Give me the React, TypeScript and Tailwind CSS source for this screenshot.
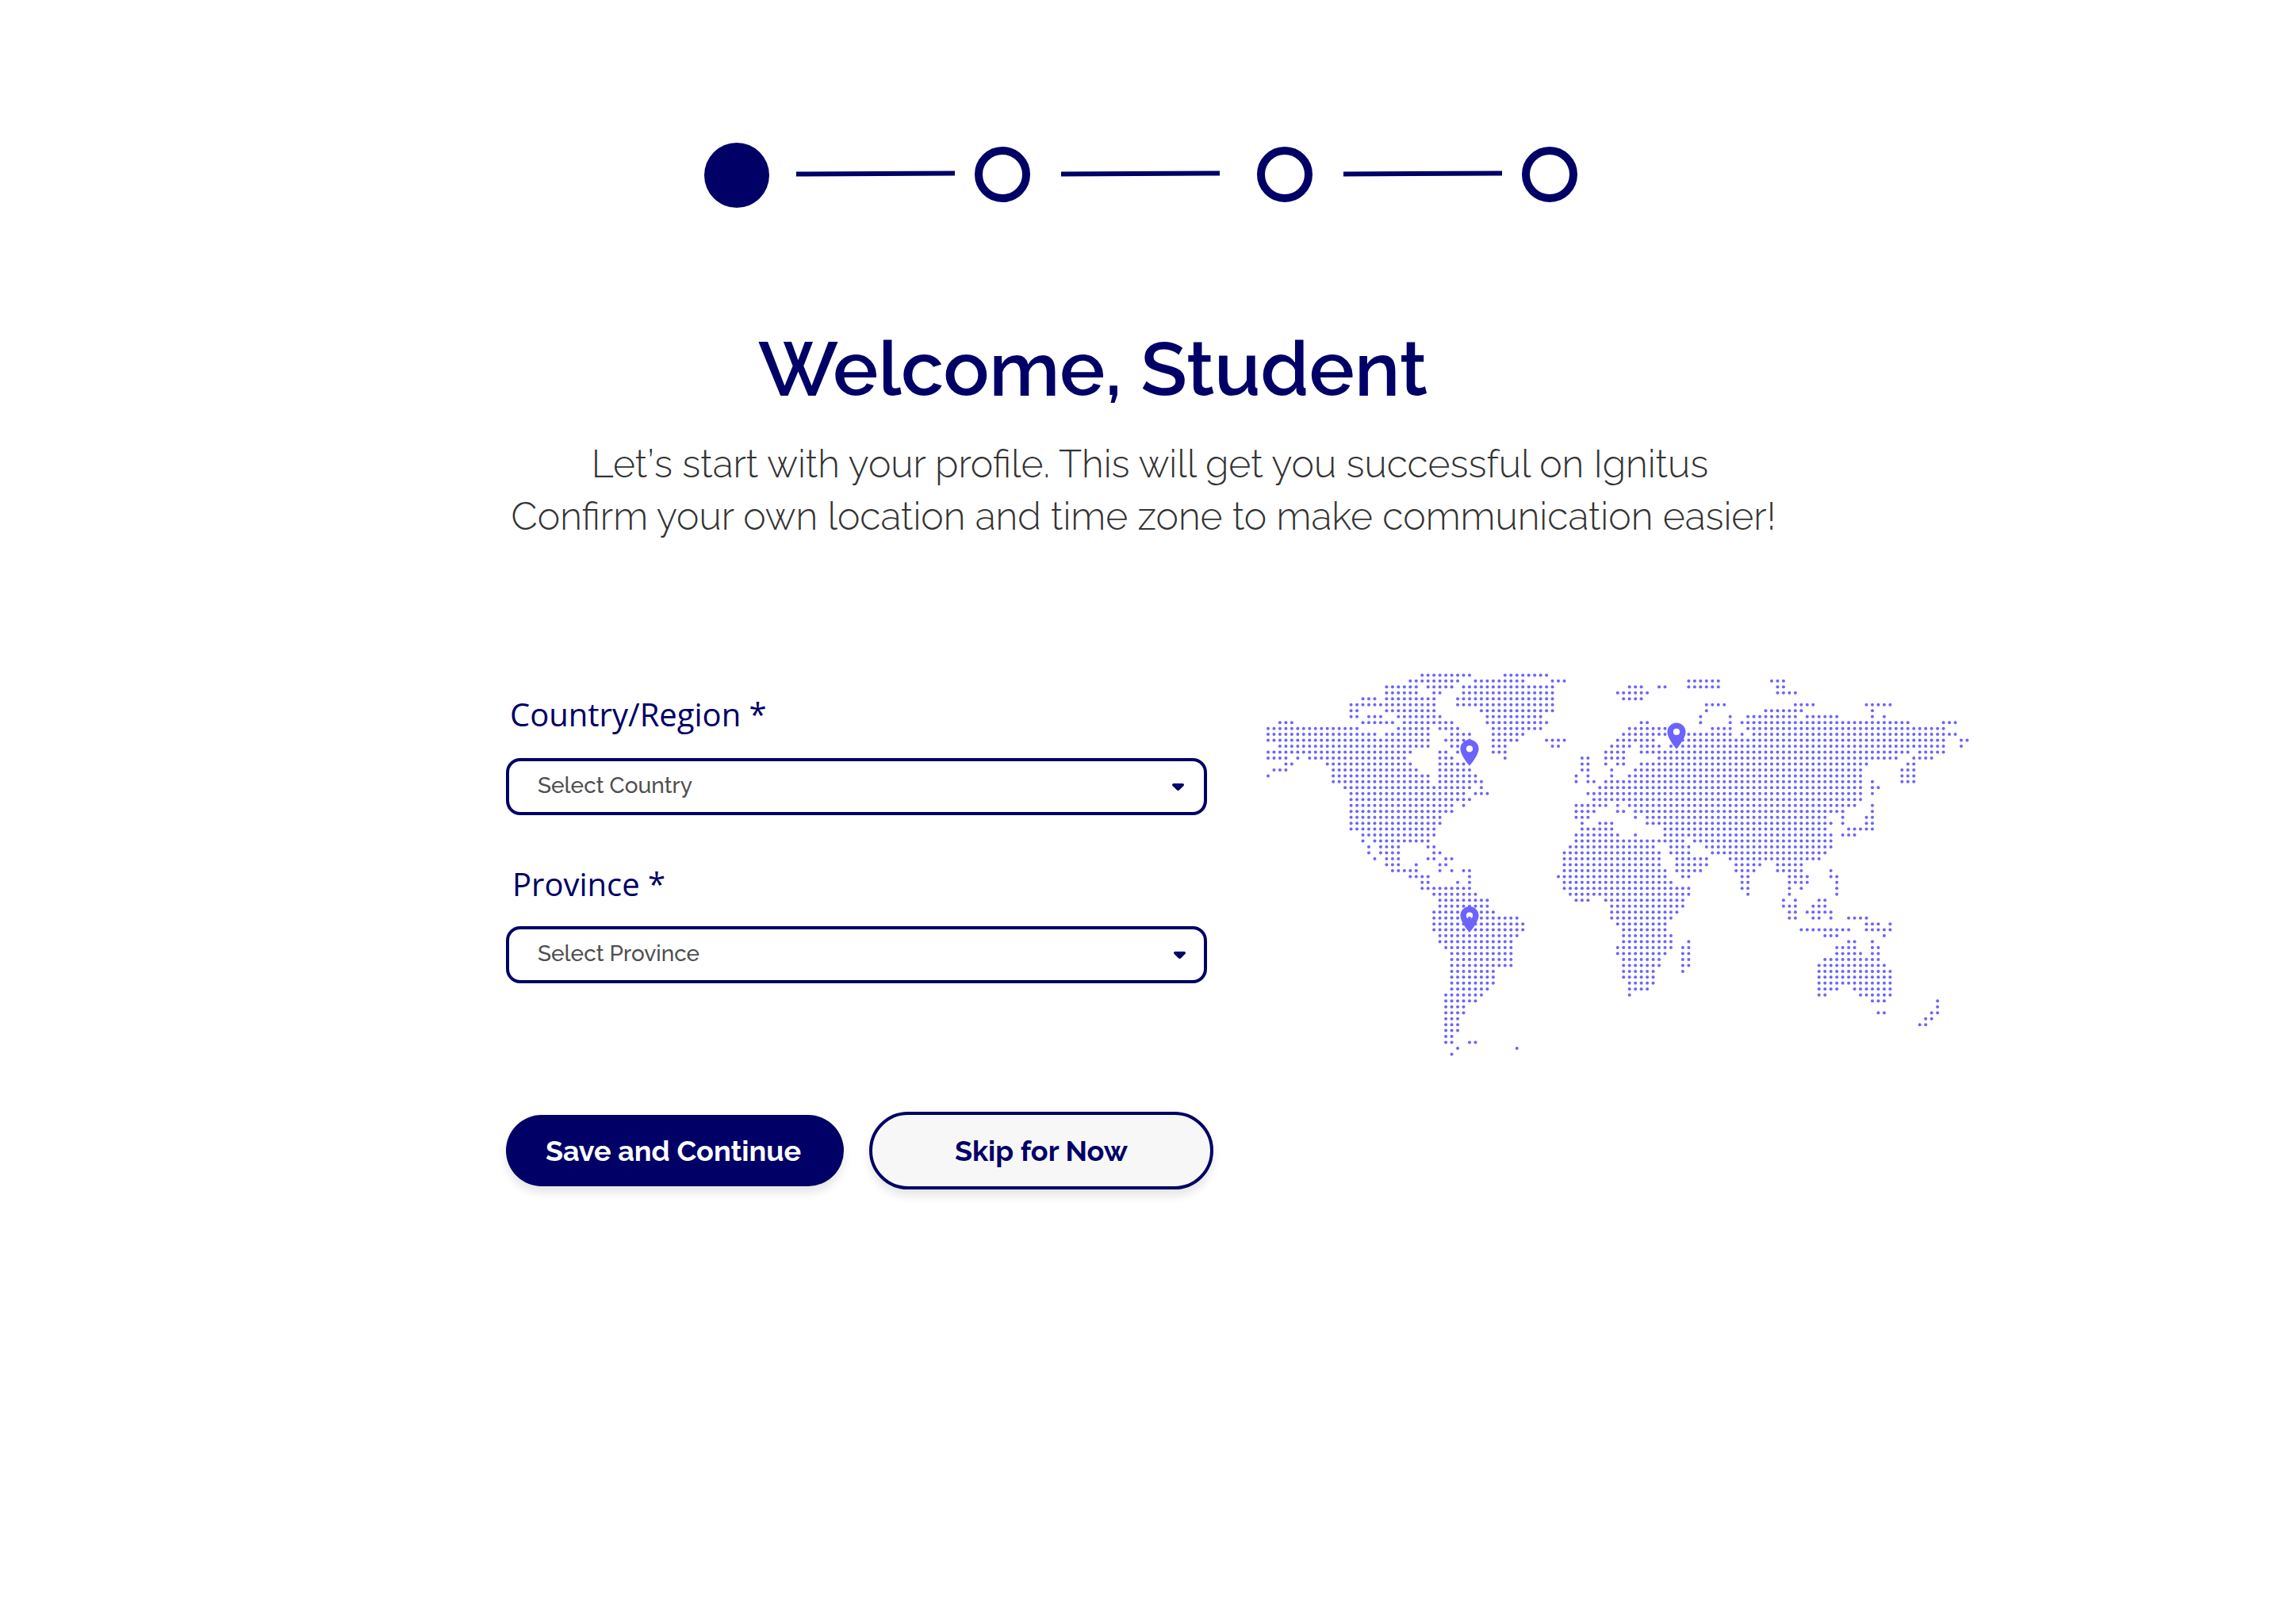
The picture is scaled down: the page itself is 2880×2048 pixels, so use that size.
import type { ReactNode } from 'react';

const PITCH = 7.47;
const ORIGIN_X = 9;
const ORIGIN_Y = 11.4;

/** Inclusive column ranges of the dots on each row of the world map. */
const MAP_ROWS: string[] = [
  '26-34 40-47',
  '24-32 35-43 48-50 71-76 85-87',
  '20-25 27-31 33-48 61-63 66-67 71-76 86-87',
  '20-25 28-29 33-48 59-64 86-89',
  '16-18 20-28 32-48 60-63',
  '14-28 32-48 74-77 89-92 101-105',
  '14-15 20-28 36-48 74 84-90 102',
  '14-15 17-19 22-29 37-46 73 78 81-89 91-96 102 104',
  '2-4 16-21 23-31 37-47 63-64 73 78 80-108 114-116',
  '0-15 22-27 29-32 38-46 61-67 75-78 81-114',
  '0-18 20-27 31-34 38-43 60-67 71-78 80 82-116',
  '0-27 30-34 38-42 47-50 59-65 70-114 117-118',
  '2-27 31-32 38-40 48-49 58-61 63-66 68-114 117',
  '0-24 29-30 32 38-40 57-60 63-108 110-114',
  '0-3 5 7-23 29-31 40 53-54 57-60 66-106 109-112',
  '3-4 10-24 29-33 53-54 57 59-60 63-101 108-109',
  '1-3 11-25 29-34 53-54 58 62-100 107-109',
  '0 11-27 29-35 52 54 58 61-100 107-109',
  '11-27 29-36 52 54-55 57-100 102 107-109',
  '13-34 36 56-100 102-103',
  '14-33 35-37 54-100 102',
  '14-34 55-100',
  '14-31 33 52-57 59 61-99 102',
  '14-31 52-55 59-60 62-97 102',
  '14-29 52-54 62 64-94 97 101-102',
  '14-29 53 56-58 64-95 97 101-102',
  '14-28 53-58 67-94 98-102',
  '16-28 52-59 62 67-95 97-99',
  '16 18-27 52-70 72-95',
  '17 19-22 27-28 51-65 68-71 74-95',
  '17 19-22 28-29 50-66 68-71 75-94',
  '18 20-22 27-28 30-31 50-66 69-74 78-93',
  '20-22 25 29-30 50-66 69-74 79-83 86-90',
  '21-25 29 31 33-34 50-67 69-73 79-82 86-90 95',
  '24-27 34 49-67 70-71 80-81 88-91 95-96',
  '26-27 32 34 50-68 80-81 88-91 96',
  '26-34 50-71 80-81 88 90 96',
  '28-35 51-71 81 88 96',
  '29-37 52-54 57-70 87 89 93-94',
  '29-37 58-70 87-89 92-94',
  '28-33 35-38 58-69 88-89 91-95',
  '28-42 58-68 88-89 92-93 95 98-101',
  '28-43 59-67 101-103 105',
  '28-43 60-67 90-98 101-105',
  '29-42 60-68 94-96 104',
  '29-41 60-68 71 98-99 102',
  '30-41 59-68 70-71 96-99 102-103',
  '31-41 59-67 70-71 96-100 102-103',
  '31-41 60-66 70-71 94-103',
  '31-41 60-66 70-71 93-104',
  '31-38 60-65 70 93-105',
  '31-38 60-65 93-105',
  '31-38 61-65 93-105',
  '31-37 61-64 93-96 99-105',
  '30-36 61 93-94 100-105',
  '30-35 102-104 113',
  '30-33 113',
  '30-33 103-104 112-113',
  '30-32 111-112',
  '30-32 110-111',
  '30-32',
  '30-31',
  '30-31 34-35',
  '32 42',
  '31',
];

const DOTS = MAP_ROWS.flatMap((row, r) =>
  row.split(' ').flatMap((range) => {
    const [from, to = from] = range.split('-').map(Number);
    return Array.from({ length: to - from + 1 }, (_, i) => ({ c: from + i, r }));
  }),
);

/** Tip-down location pins: horizontal centre and top edge. */
const PINS = [
  { x: 263, y: 92.7 },
  { x: 524, y: 71.4 },
  { x: 263, y: 303 },
];

function WorldMap() {
  return (
    <svg className="h-[500px] w-[900px] fill-[#6c63ff]" viewBox="0 0 900 500" aria-label="World map">
      {DOTS.map(({ c, r }) => (
        <circle key={`${c}-${r}`} cx={ORIGIN_X + c * PITCH} cy={ORIGIN_Y + r * PITCH} r={2} />
      ))}
      {PINS.map(({ x, y }) => (
        <path
          key={`${x}-${y}`}
          transform={`translate(${x - 19.8} ${y - 3.3}) scale(1.65)`}
          d="M12 2C8.13 2 5 5.13 5 9c0 5.25 7 13 7 13s7-7.75 7-13c0-3.87-3.13-7-7-7zm0 9.5a2.5 2.5 0 0 1 0-5 2.5 2.5 0 0 1 0 5z"
        />
      ))}
    </svg>
  );
}

function Ring({ className }: { className: string }) {
  return <div className={`mt-[5px] size-[70px] shrink-0 rounded-full border-[10px] border-[#000066] ${className}`} />;
}

function Connector({ className }: { className: string }) {
  return <div className={`h-[6px] w-[200px] shrink-0 rotate-[-0.25deg] bg-[#000066] ${className}`} />;
}

function Stepper() {
  return (
    <div className="ml-[888px] mt-[180px] flex h-[82px] items-start">
      <div className="size-[82px] shrink-0 rounded-full bg-[#000066]" />
      <Connector className="ml-[34px] mt-[36.4px]" />
      <Ring className="ml-[25px]" />
      <Connector className="ml-[39px] mt-[35.6px]" />
      <Ring className="ml-[47px]" />
      <Connector className="ml-[39px] mt-[36.4px]" />
      <Ring className="ml-[25px]" />
    </div>
  );
}

function Select({ children, caret }: { children: ReactNode; caret: string }) {
  return (
    <button
      type="button"
      className="flex h-[72px] w-[884px] items-center justify-between rounded-[18px] border-4 border-[#000066] bg-white pl-[36px]"
    >
      <span className="pb-[2px] text-[28px] font-medium leading-none text-[#4f4f4f]">{children}</span>
      <svg className={`h-[9px] w-[15px] fill-[#000066] ${caret}`} viewBox="0 0 15 9">
        <path d="M1.8 0h11.4c1.6 0 2.3 1.9 1.2 3L9.1 8.3c-.9 .9-2.3 .9-3.2 0L.6 3C-.5 1.9 .2 0 1.8 0z" />
      </svg>
    </button>
  );
}

export default function App() {
  return (
    <main className="flex h-[2048px] w-[2880px] flex-col overflow-hidden bg-white font-[Raleway,Lato,sans-serif]">
      <Stepper />

      <h1 className="ml-[956px] mt-[154.5px] whitespace-nowrap text-[96px] font-semibold leading-none text-[#000066]">
        Welcome, Student
      </h1>

      <div className="ml-[643px] mt-[39.5px] flex w-[1598px] flex-col items-center whitespace-nowrap text-[48px] font-light leading-[66px] text-[#333333]">
        <p className="pl-[16px]">
          Let<span className="px-[0.1px]">’</span>s start with your profile. This will get you successful on Ignitus
        </p>
        <p>Confirm your own location and time zone to make communication easier!</p>
      </div>

      <div className="ml-[638px] mt-[156px] flex items-start">
        <div className="flex w-[952px] flex-col items-start">
          <label className="ml-[5px] mt-[41px] h-[40px] font-['Open_Sans',sans-serif] text-[40px] leading-[40px] text-[#000066]">
            Country/Region *
          </label>
          <div className="mt-[35px]">
            <Select caret="mr-[25px]">Select Country</Select>
          </div>
          <label className="ml-2 mt-[67px] h-[40px] font-['Open_Sans',sans-serif] text-[40px] leading-[40px] text-[#000066]">
            Province *
          </label>
          <div className="mt-[33px]">
            <Select caret="mr-[23px]">Select Province</Select>
          </div>
        </div>
        <WorldMap />
      </div>

      <div className="ml-[638px] mt-[62px] flex items-center gap-[32px] text-[36px] font-bold leading-none">
        <button
          type="button"
          className="h-[90px] w-[426px] rounded-full bg-[#000066] pr-[4px] text-white shadow-[0_8px_12px_rgba(0,0,0,0.1)]"
        >
          Save and Continue
        </button>
        <button
          type="button"
          className="h-[98px] w-[434px] rounded-full border-4 border-[#000066] bg-[#f7f7f7] text-[#000066] shadow-[0_8px_12px_rgba(0,0,0,0.1)]"
        >
          Skip for Now
        </button>
      </div>
    </main>
  );
}
